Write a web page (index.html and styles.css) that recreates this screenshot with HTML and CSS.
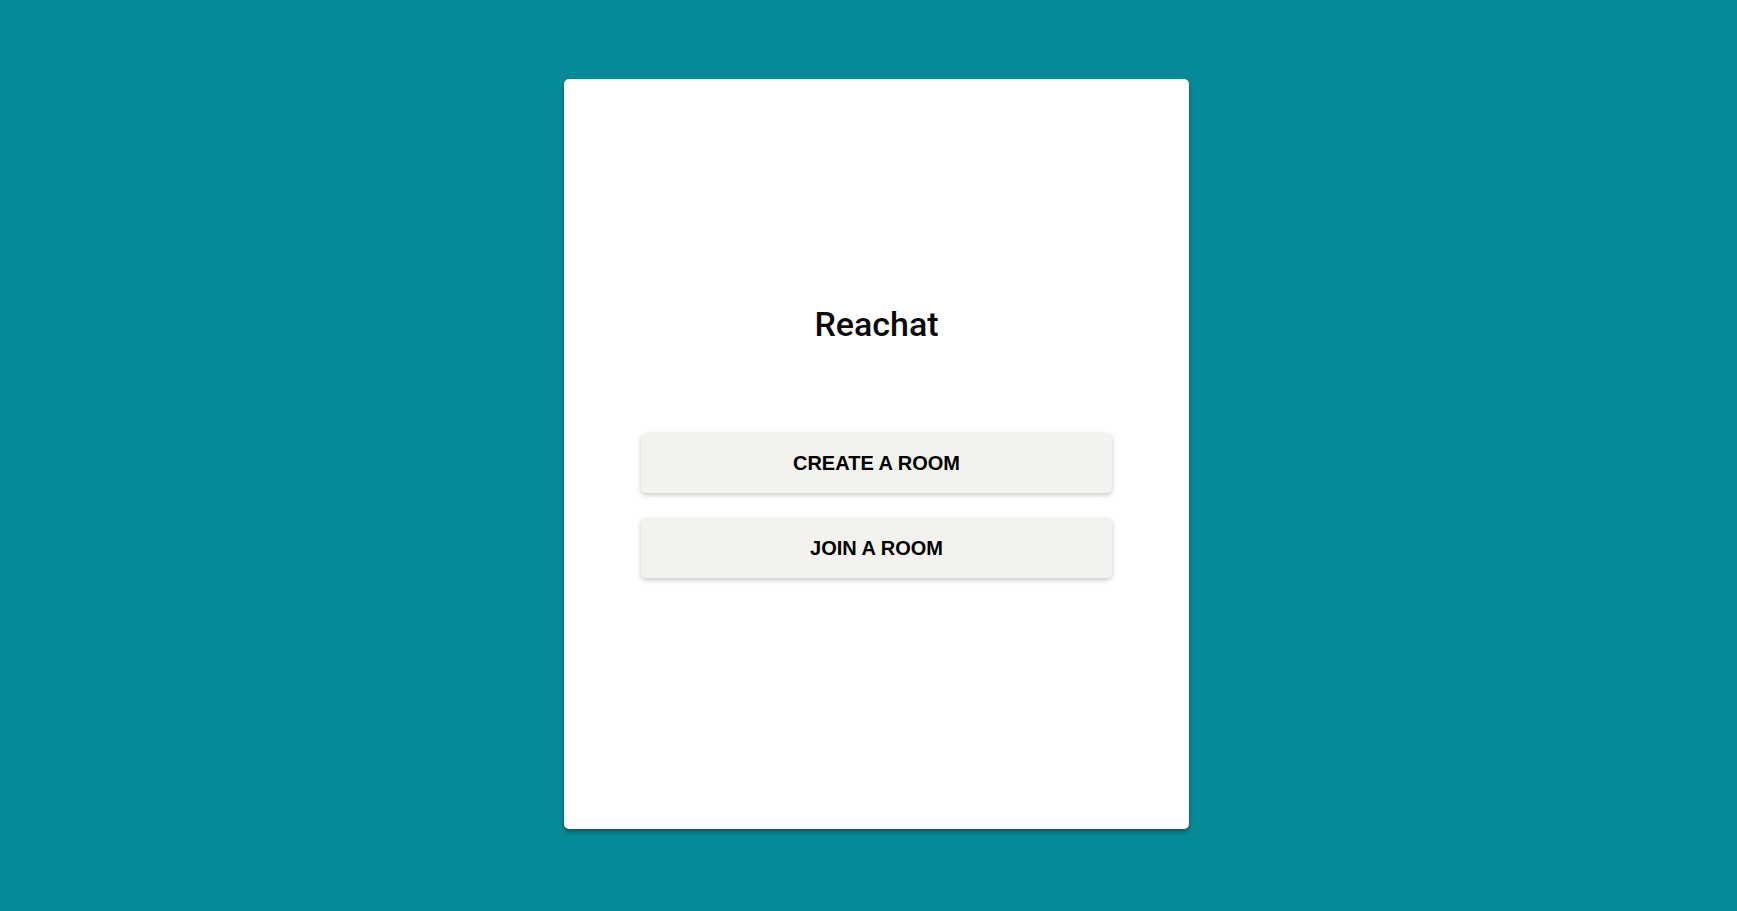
FILE: index.html
```html
<!DOCTYPE html>
<html lang="en">
<head>
<meta charset="utf-8">
<title>Reachat</title>
<link rel="stylesheet" href="styles.css">
</head>
<body>
<div class="page">
  <main class="card">
    <h1 class="title">Reachat</h1>
    <div class="actions">
      <button class="btn" type="button">CREATE A ROOM</button>
      <button class="btn" type="button">JOIN A ROOM</button>
    </div>
  </main>
</div>
</body>
</html>
```
FILE: styles.css
```css
html, body {
  margin: 0;
  padding: 0;
  height: 100%;
}
body {
  background: #078a97;
  font-family: Roboto, "Liberation Sans", Arial, sans-serif;
}
.page {
  display: flex;
  justify-content: center;
  padding: 79px 0 0 16px;
  box-sizing: border-box;
}
.card {
  width: 625px;
  height: 750px;
  box-sizing: border-box;
  background: #ffffff;
  border-radius: 5px;
  box-shadow: 0 3px 5px rgba(0, 0, 0, 0.35);
  padding: 225px 77px 0;
  display: flex;
  flex-direction: column;
}
.title {
  margin: 0;
  font-family: Roboto, sans-serif;
  font-weight: 500;
  font-size: 34px;
  line-height: 40px;
  color: #0a0a0a;
  text-align: center;
}
.actions {
  margin-top: 89px;
  display: flex;
  flex-direction: column;
  gap: 25px;
}
.btn {
  height: 60px;
  border: none;
  border-radius: 5px;
  background: #f3f2ee;
  box-shadow: 0 2px 5px rgba(0, 0, 0, 0.22);
  font-family: "Liberation Sans", Arial, sans-serif;
  font-weight: bold;
  font-size: 20px;
  color: #000;
  cursor: pointer;
  padding: 0;
}
```
